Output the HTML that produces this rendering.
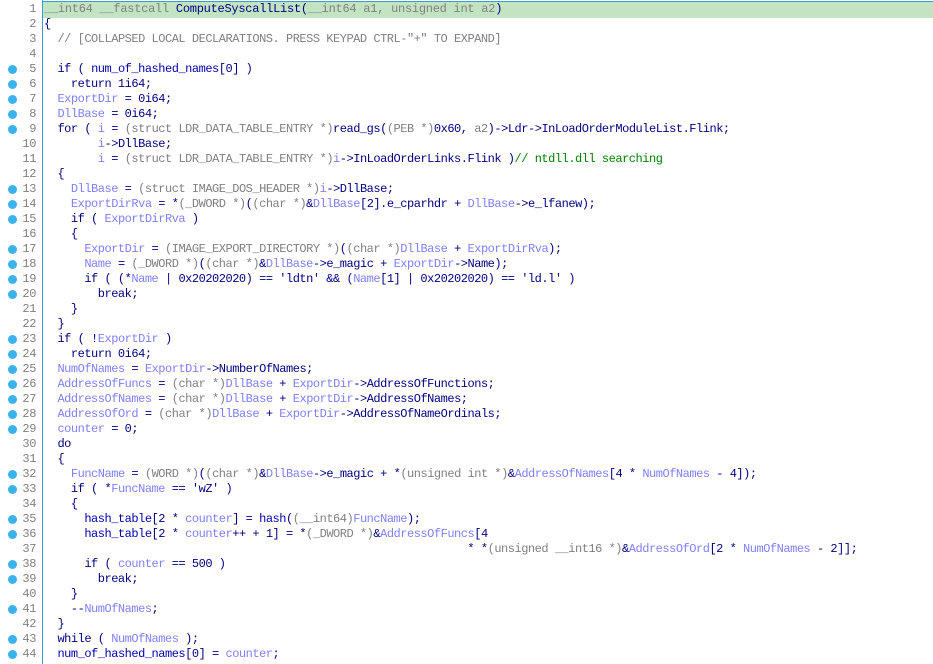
<!DOCTYPE html>
<html><head><meta charset="utf-8"><style>
html,body{margin:0;padding:0;background:#fff;width:933px;height:664px;overflow:hidden}
body{position:relative;font-family:"Liberation Mono","DejaVu Sans Mono",monospace;font-size:12px;color:#000080}
.gut{position:absolute;left:0;top:0;width:42px;height:664px;background:#fff}
.vl{position:absolute;left:42px;top:0;width:1px;height:664px;background:#3a9ad9}
.hl{position:absolute;left:43px;top:1px;width:890px;height:16px;background:#c2e4c2;border-top:1px solid #3a9ad9}
.row{position:absolute;left:0;height:15px;line-height:15px;white-space:pre}
.ln{position:absolute;left:0;width:36px;text-align:right;color:#808080;letter-spacing:-0.4px}
.tx{position:absolute;left:44px;letter-spacing:-0.48px}
.dot{position:absolute;left:8px;width:9px;height:9px;border-radius:50%;background:#39b2ee}
.v{color:#7f7fff}.g{color:#808080}.gl{color:#0000b0}.c{color:#008000}
</style></head><body>
<div class="gut"></div><div class="vl"></div><div class="hl"></div>
<div id="c"></div>
<script>
var L=[
'<span class="g">__int64 __fastcall</span> ComputeSyscallList(<span class="g">__int64 a1, unsigned int a2</span>)',
'{',
'  <span class="g">// [COLLAPSED LOCAL DECLARATIONS. PRESS KEYPAD CTRL-"+" TO EXPAND]</span>',
'',
'  if ( <span class="gl">num_of_hashed_names</span>[0] )',
'    return 1i64;',
'  <span class="v">ExportDir</span> = 0i64;',
'  <span class="v">DllBase</span> = 0i64;',
'  for ( <span class="v">i</span> = <span class="g">(struct LDR_DATA_TABLE_ENTRY *)</span>read_gs(<span class="g">(PEB *)</span>0x60, <span class="g">a2</span>)-&gt;Ldr-&gt;InLoadOrderModuleList.Flink;',
'        <span class="v">i</span>-&gt;DllBase;',
'        <span class="v">i</span> = <span class="g">(struct LDR_DATA_TABLE_ENTRY *)</span><span class="v">i</span>-&gt;InLoadOrderLinks.Flink )<span class="c">// ntdll.dll searching</span>',
'  {',
'    <span class="v">DllBase</span> = <span class="g">(struct IMAGE_DOS_HEADER *)</span><span class="v">i</span>-&gt;DllBase;',
'    <span class="v">ExportDirRva</span> = *<span class="g">(_DWORD *)</span>(<span class="g">(char *)</span>&amp;<span class="v">DllBase</span>[2].e_cparhdr + <span class="v">DllBase</span>-&gt;e_lfanew);',
'    if ( <span class="v">ExportDirRva</span> )',
'    {',
'      <span class="v">ExportDir</span> = <span class="g">(IMAGE_EXPORT_DIRECTORY *)</span>(<span class="g">(char *)</span><span class="v">DllBase</span> + <span class="v">ExportDirRva</span>);',
'      <span class="v">Name</span> = <span class="g">(_DWORD *)</span>(<span class="g">(char *)</span>&amp;<span class="v">DllBase</span>-&gt;e_magic + <span class="v">ExportDir</span>-&gt;Name);',
'      if ( (*<span class="v">Name</span> | 0x20202020) == \'ldtn\' &amp;&amp; (<span class="v">Name</span>[1] | 0x20202020) == \'ld.l\' )',
'        break;',
'    }',
'  }',
'  if ( !<span class="v">ExportDir</span> )',
'    return 0i64;',
'  <span class="v">NumOfNames</span> = <span class="v">ExportDir</span>-&gt;NumberOfNames;',
'  <span class="v">AddressOfFuncs</span> = <span class="g">(char *)</span><span class="v">DllBase</span> + <span class="v">ExportDir</span>-&gt;AddressOfFunctions;',
'  <span class="v">AddressOfNames</span> = <span class="g">(char *)</span><span class="v">DllBase</span> + <span class="v">ExportDir</span>-&gt;AddressOfNames;',
'  <span class="v">AddressOfOrd</span> = <span class="g">(char *)</span><span class="v">DllBase</span> + <span class="v">ExportDir</span>-&gt;AddressOfNameOrdinals;',
'  <span class="v">counter</span> = 0;',
'  do',
'  {',
'    <span class="v">FuncName</span> = <span class="g">(WORD *)</span>(<span class="g">(char *)</span>&amp;<span class="v">DllBase</span>-&gt;e_magic + *<span class="g">(unsigned int *)</span>&amp;<span class="v">AddressOfNames</span>[4 * <span class="v">NumOfNames</span> - 4]);',
'    if ( *<span class="v">FuncName</span> == \'wZ\' )',
'    {',
'      <span class="gl">hash_table</span>[2 * <span class="v">counter</span>] = <span class="gl">hash</span>(<span class="g">(__int64)</span><span class="v">FuncName</span>);',
'      <span class="gl">hash_table</span>[2 * <span class="v">counter</span>++ + 1] = *<span class="g">(_DWORD *)</span>&amp;<span class="v">AddressOfFuncs</span>[4',
'                                                               * *<span class="g">(unsigned __int16 *)</span>&amp;<span class="v">AddressOfOrd</span>[2 * <span class="v">NumOfNames</span> - 2]];',
'      if ( <span class="v">counter</span> == 500 )',
'        break;',
'    }',
'    --<span class="v">NumOfNames</span>;',
'  }',
'  while ( <span class="v">NumOfNames</span> );',
'  <span class="gl">num_of_hashed_names</span>[0] = <span class="v">counter</span>;'
];
var dots=[5,6,7,8,9,13,14,15,17,18,19,20,23,24,25,26,27,28,29,32,33,35,36,38,39,41,43,44];
var h='';
for(var i=0;i<L.length;i++){
 var t=2+15*i;
 h+='<div class="row" style="top:'+t+'px;width:933px"><span class="ln">'+(i+1)+'</span><span class="tx"'+(i==0?' style="letter-spacing:-0.26px"':'')+'>'+L[i]+'</span></div>';
 if(dots.indexOf(i+1)>=0)h+='<div class="dot" style="top:'+(t+3)+'px"></div>';
}
document.getElementById('c').innerHTML=h;
</script>
</body></html>
